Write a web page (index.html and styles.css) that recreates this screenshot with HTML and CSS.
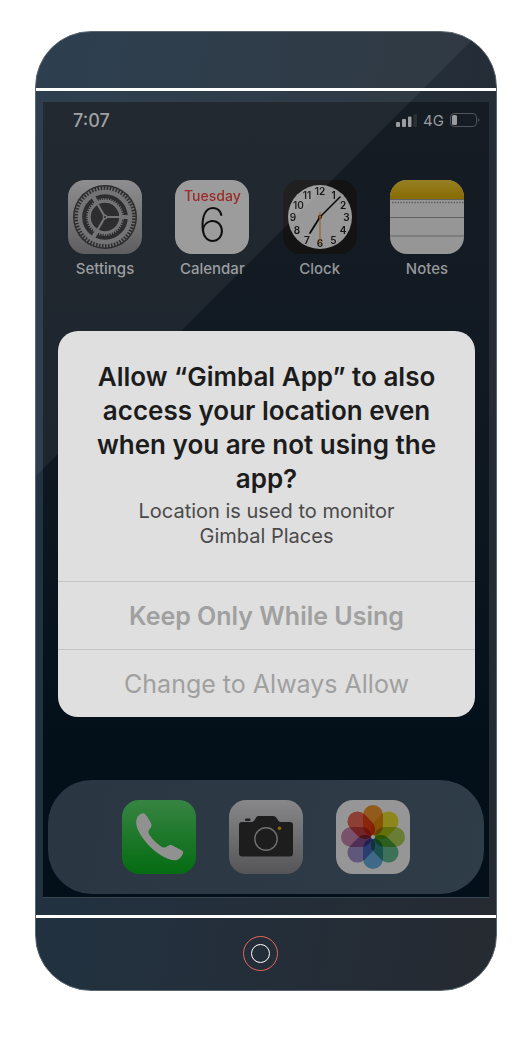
FILE: index.html
```html
<!DOCTYPE html>
<html lang="en">
<head>
  <meta charset="UTF-8">
  <meta name="viewport" content="width=device-width, initial-scale=1.0">
  <title>Gimbal App</title>
  <link rel="stylesheet" href="styles.css">
</head>
<body>

  <div class="phone">
    <div class="top"></div>

    <div class="screen">
      <!-- Status bar -->
      <div class="status-bar">
        <span class="time">7:07</span>
        <div class="status-right">
          <svg class="signal" width="21" height="14" viewBox="0 0 21 14" fill="#9a9c9f">
            <rect x="0" y="9" width="4" height="5" rx="1"/>
            <rect x="6" y="6" width="4" height="8" rx="1"/>
            <rect x="12" y="3.500" width="3.500" height="10.500" rx="1"/>
            <rect x="17.500" y="1" width="3.500" height="13" rx="1" fill="#2b3035"/>
          </svg>
          <span>4G</span>
          <svg class="battery" width="30" height="14" viewBox="0 0 30 14">
            <rect x="0.5" y="0.5" width="26" height="13" rx="3.5" fill="none" stroke="#50555a"/>
            <rect x="2" y="2" width="5" height="10" rx="1.5" fill="#9a9c9f"/>
            <path d="M28 5c2 1 2 3 0 4z" fill="#50555a"/>
          </svg>
        </div>
      </div>

      <!-- Apps -->
      <div class="apps">
        <a class="app" href="#">
          <svg class="icon" viewBox="0 0 74 74">
            <defs>
              <linearGradient id="grey" x1="0" y1="0" x2="0" y2="1">
                <stop offset="0" stop-color="#e2e2e6"/>
                <stop offset="1" stop-color="#8e8e93"/>
              </linearGradient>
            </defs>
            <rect width="74" height="74" fill="url(#grey)"/>
            <circle cx="37" cy="37" r="32" fill="#35353a"/>
            <circle cx="37" cy="37" r="28.5" fill="none" stroke="#b4b4b8" stroke-width="4" stroke-dasharray="1.4 1.584"/>
            <circle cx="37" cy="37" r="25" fill="none" stroke="#b4b4b8" stroke-width="4.400"/>
            <circle cx="37" cy="37" r="18" fill="none" stroke="#b4b4b8" stroke-width="2" stroke-dasharray="1 1.356"/>
            <circle cx="37" cy="37" r="15.800" fill="none" stroke="#b4b4b8" stroke-width="3.200"/>
            <g stroke="#b4b4b8" stroke-linecap="round">
              <path d="M37 37H58M37 37L26.5 18.8M37 37L26.5 55.2" stroke-width="2.2"/>
              <path d="M54 37H60M28.500 22.300L25.500 17.100M28.500 51.700L25.500 56.900" stroke-width="4.200"/>
            </g>
            <circle cx="37" cy="37" r="2.4" fill="#b4b4b8"/>
            <circle cx="37" cy="37" r="1.1" fill="#35353a"/>
          </svg>
          <span>Settings</span>
        </a>
        <a class="app" href="#">
          <div class="icon calendar">
            <span class="day">Tuesday</span>
            <span class="date">6</span>
          </div>
          <span>Calendar</span>
        </a>
        <a class="app" href="#">
          <svg class="icon" viewBox="0 0 74 74">
            <rect width="74" height="74" fill="#1f1f1f"/>
            <circle cx="37" cy="37" r="32" fill="#fff"/>
            <g class="numbers" fill="#222">
              <text x="37" y="15">12</text>
              <text x="50.5" y="18.500">1</text>
              <text x="60" y="28.500">2</text>
              <text x="63.5" y="41">3</text>
              <text x="60" y="54">4</text>
              <text x="50.5" y="63.500">5</text>
              <text x="37" y="67">6</text>
              <text x="24" y="63.500">7</text>
              <text x="14" y="54">8</text>
              <text x="10" y="41">9</text>
              <text x="15.5" y="28.500">10</text>
              <text x="24" y="18.500">11</text>
            </g>
            <path d="M37 37L57 17" stroke="#111" stroke-width="1.6" stroke-linecap="round"/>
            <path d="M37 37L27 53" stroke="#111" stroke-width="1.8" stroke-linecap="round"/>
            <circle cx="37" cy="37" r="2" fill="#111"/>
            <path d="M37 32V65" stroke="#f59a23" stroke-width="1"/>
            <circle cx="37" cy="37" r="1.3" fill="#f59a23"/>
          </svg>
          <span>Clock</span>
        </a>
        <a class="app" href="#">
          <svg class="icon" viewBox="0 0 74 74">
            <defs>
              <linearGradient id="yellow" x1="0" y1="0" x2="0" y2="1">
                <stop offset="0" stop-color="#fbd53c"/>
                <stop offset="1" stop-color="#e2b100"/>
              </linearGradient>
            </defs>
            <rect width="74" height="74" fill="#fafafa"/>
            <rect width="74" height="19" fill="url(#yellow)"/>
            <path d="M0 19.5H74M0 37.5H74M0 56H74" stroke="#a5a5a8" stroke-width="1.2"/>
            <path d="M2 22.5H74" stroke="#9a9a9e" stroke-width="1.4" stroke-dasharray="1.4 1.4"/>
          </svg>
          <span>Notes</span>
        </a>
      </div>

      <!-- Location dialog -->
      <div class="dialog" role="alertdialog" aria-labelledby="title" aria-describedby="message">
        <div class="dialog-text">
          <h1 id="title">Allow “Gimbal App” to also access your location even when you are not using the app?</h1>
          <p id="message">Location is used to monitor<br>Gimbal Places</p>
        </div>
        <button class="keep">Keep Only While Using</button>
        <button>Change to Always Allow</button>
      </div>

      <!-- Dock -->
      <div class="dock">
        <a href="#" aria-label="Phone">
          <svg class="icon" viewBox="0 0 74 74">
            <defs>
              <linearGradient id="green" x1="0" y1="0" x2="0" y2="1">
                <stop offset="0" stop-color="#5bdc6e"/>
                <stop offset="1" stop-color="#07b31d"/>
              </linearGradient>
            </defs>
            <rect width="74" height="74" fill="url(#green)"/>
            <path d="M15 18C16 15 20 13 22 13.200C23 13.400 24 15 25 16.500L29 23C30 25 29.500 26.500 28.500 28C27 30 26 31 26.500 33C28 37 36 45 40 47C42 48 43.500 47.500 45 46.500C47 45 48 44.500 50 45.300L60 50.500C61.500 51.500 61.300 53 60.500 54.500C58.500 58.500 56 60.500 52 60.300C44 60 31 51 23 41C16 32 12.500 24 15 18Z" fill="#f2f2f2"/>
          </svg>
        </a>
        <a href="#" aria-label="Camera">
          <svg class="icon" viewBox="0 0 74 74">
            <rect width="74" height="74" fill="url(#grey)"/>
            <path d="M13 22H22C25 22 25.500 20 26.500 18.500C27.500 16.500 28.500 16 30 16H44C46 16 47 17 48 18.500C49 20 49.500 22 52 22H61Q64 22 64 25V53Q64 56.500 61 56.500H13Q10 56.500 10 53V25Q10 22 13 22Z" fill="#303032"/>
            <rect x="16" y="18.500" width="5.500" height="2.500" rx="1" fill="#303032"/>
            <circle cx="37" cy="39" r="11.200" fill="none" stroke="#b9b9bd" stroke-width="1.400"/>
            <circle cx="50.500" cy="28.200" r="1.700" fill="#f5b400"/>
          </svg>
        </a>
        <a href="#" aria-label="Photos">
          <svg class="icon" viewBox="0 0 74 74">
            <rect width="74" height="74" fill="#fafafa"/>
            <g class="petals">
              <rect x="27" y="5" width="20" height="31" rx="10" fill="#f79a2e"/>
              <rect x="27" y="5" width="20" height="31" rx="10" fill="#f0e52c" transform="rotate(45 37 37)"/>
              <rect x="27" y="5" width="20" height="31" rx="10" fill="#b5d65a" transform="rotate(90 37 37)"/>
              <rect x="27" y="5" width="20" height="31" rx="10" fill="#69c296" transform="rotate(135 37 37)"/>
              <rect x="27" y="5" width="20" height="31" rx="10" fill="#6ab4e8" transform="rotate(180 37 37)"/>
              <rect x="27" y="5" width="20" height="31" rx="10" fill="#a594d0" transform="rotate(225 37 37)"/>
              <rect x="27" y="5" width="20" height="31" rx="10" fill="#d08ab4" transform="rotate(270 37 37)"/>
              <rect x="27" y="5" width="20" height="31" rx="10" fill="#f0695a" transform="rotate(315 37 37)"/>
            </g>
            <circle cx="37" cy="37" r="2" fill="#fff"/>
          </svg>
        </a>
      </div>
    </div>

    <div class="bottom">
      <button class="home" aria-label="Home"></button>
    </div>
  </div>

</body>
</html>
```
FILE: styles.css
```css
* {
  margin: 0;
  padding: 0;
  box-sizing: border-box;
}
body {
  font-family: Inter, "Liberation Sans", sans-serif;
  background-color: white;
  padding: 31px 33px 49px 35px;
}
.phone {
  position: relative;
  overflow: hidden;
  border: 1px solid #59666f;
  border-radius: 56px;
  background: linear-gradient(100deg, #203446, #262a31);
}
/* light reflection across the glass */
.phone::after {
  content: "";
  position: absolute;
  inset: 0;
  background-color: rgba(255, 255, 255, 0.06);
  clip-path: polygon(0 0, 444px 0, 0 444px);
  pointer-events: none;
}
.top {
  position: relative;
  z-index: 1;
  height: 59px;
  border-bottom: 3px solid white;
}
.screen {
  margin: 11px 7px 17px;
  padding: 8px 5px 3px;
  background: linear-gradient(#161c24, #0f1821 45%, #03101a 80%);
  border-bottom: 1px solid #3a4650;
}
.status-bar {
  display: flex;
  justify-content: space-between;
  align-items: center;
  height: 20px;
  padding: 0 4px 0 25px;
  color: #9a9c9f;
}
.time {
  font-size: 18px;
  font-weight: 500;
}
.status-right {
  display: flex;
  align-items: center;
  gap: 6px;
  font-size: 15px;
}
.apps {
  display: flex;
  justify-content: space-between;
  padding: 50px 20px 0;
}
.app {
  display: flex;
  flex-direction: column;
  align-items: center;
  width: 74px;
  color: #95989b;
  font-size: 15px;
  font-weight: 500;
  line-height: 20px;
  text-decoration: none;
}
.icon {
  display: block;
  width: 74px;
  height: 74px;
  border-radius: 17px;
  margin-bottom: 5px;
  filter: brightness(0.6);
}
.calendar {
  display: flex;
  flex-direction: column;
  align-items: center;
  background-color: #fafafa;
}
.day {
  margin-top: 6px;
  color: #f5352e;
  font-size: 14px;
  line-height: 20px;
}
.date {
  color: black;
  font-size: 48px;
  font-weight: 200;
  line-height: 38px;
}
.numbers {
  font-size: 10px;
  font-weight: 600;
  text-anchor: middle;
}
.petals rect {
  mix-blend-mode: multiply;
}
.dialog {
  position: relative;
  z-index: 2;
  overflow: hidden;
  margin: 52px 9px 63px 10px;
  border-radius: 20px;
  background-color: #dfdfdf;
  text-align: center;
}
.dialog-text {
  padding: 29px 36px 32px;
}
.dialog h1 {
  color: #1c1c1c;
  font-size: 26px;
  font-weight: 600;
  line-height: 34px;
}
.dialog p {
  margin-top: 3px;
  color: #4a4a4a;
  font-size: 20px;
  line-height: 25px;
}
.dialog button {
  display: block;
  width: 100%;
  height: 68px;
  border: none;
  border-top: 1px solid #c4c4c4;
  background: none;
  color: #a0a0a0;
  font-family: inherit;
  font-size: 25px;
}
.dialog .keep {
  font-weight: 600;
}
.dock {
  display: flex;
  justify-content: center;
  gap: 33px;
  height: 114px;
  padding-top: 20px;
  border-radius: 44px;
  background: linear-gradient(100deg, #2a3642, #2f3d49);
}
.bottom {
  display: flex;
  justify-content: center;
  height: 75px;
  padding: 18px 12px 0 0;
  border-top: 3px solid white;
}
.home {
  display: flex;
  justify-content: center;
  align-items: center;
  width: 35px;
  height: 35px;
  border: 1px solid #e8665c;
  border-radius: 50%;
  background: none;
}
.home::before {
  content: "";
  width: 17px;
  height: 17px;
  border: 1px solid white;
  border-radius: 50%;
}
```
